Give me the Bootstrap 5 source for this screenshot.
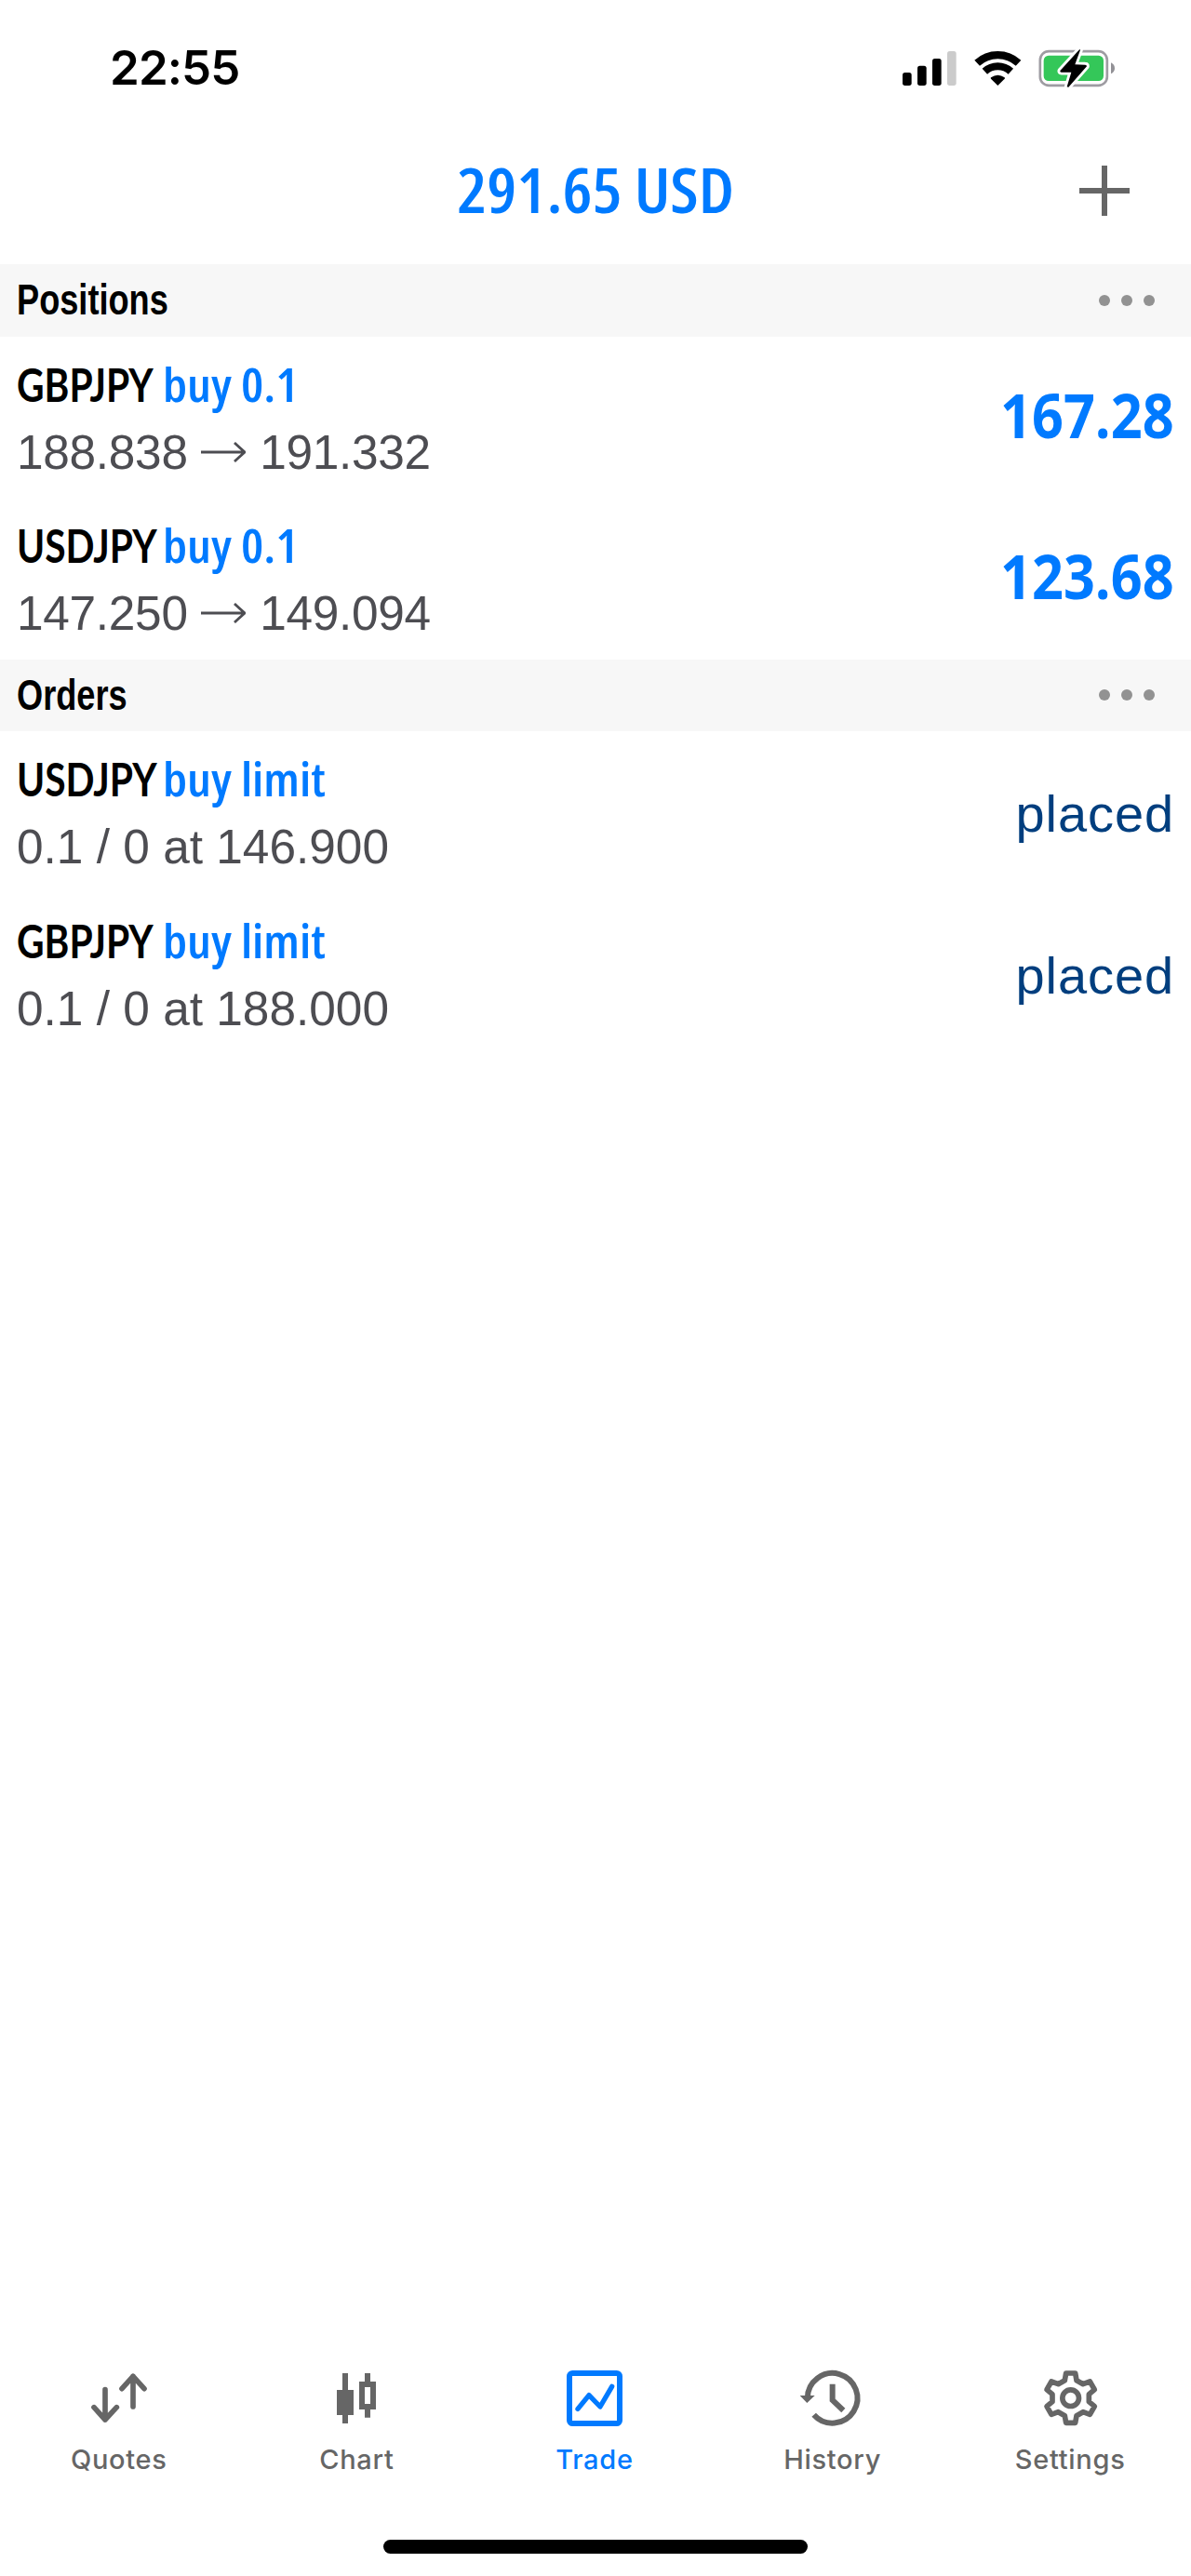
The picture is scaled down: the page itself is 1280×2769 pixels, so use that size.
<!DOCTYPE html>
<html lang="en">
<head>
<meta charset="utf-8">
<meta name="viewport" content="width=device-width, initial-scale=1">
<title>Trade</title>
<link href="https://cdn.jsdelivr.net/npm/bootstrap@5.3.0/dist/css/bootstrap.min.css" rel="stylesheet">
<style>
  :root { --accent: #007aff; --ink-soft: #4d4d52; --tab: #666; }
  body { font-family: "Liberation Sans", Arial, sans-serif; color: #000; background: #fff; }
  .screen { height: 2769px; }
  .status { height: 145px; padding: 0 80px 0 118px; }
  .clock { font: 600 51px/145px Inter, sans-serif; letter-spacing: -.9px; }
  .topbar { height: 139px; padding-bottom: 23px; }
  .balance { font: 600 66px/114px "Open Sans", sans-serif; font-stretch: 75%; transform: scaleX(1.086); color: var(--accent); }
  .add { padding-right: 66px; padding-top: 3px; }
  .section-bar { height: 77.5px; background: #f7f7f7; padding: 0 39px 0 18px; }
  .section-name { font-weight: 700; font-size: 46.5px; line-height: 77px; transform: scaleX(.778); transform-origin: 0 50%; }
  .deal { height: 173.6px; padding: 16px 18px 13px 18px; }
  .deal-title { line-height: 71px; }
  .deal-symbol { width: 157px; font: 700 50px/71px Lato, sans-serif; transform: scaleX(.815); transform-origin: 0 50%; }
  .deal-kind { font: 600 50px/71px "Open Sans", sans-serif; font-stretch: 75%; transform: scaleX(1.088); transform-origin: 0 50%; color: var(--accent); }
  .deal-info { font-size: 51.4px; line-height: 74px; color: var(--ink-soft); }
  .deal-price { letter-spacing: -.3px; }
  .deal-info svg { margin: 0 15px 0 14.5px; }
  .profit { font: 700 67px/134px "Open Sans", sans-serif; transform: scaleX(.886); transform-origin: 100% 50%; color: var(--accent); }
  .state { font-size: 56px; line-height: 146px; letter-spacing: .9px; color: #003e7e; }
  .tabs { width: 1278px; padding-bottom: 68px; }
  .tab { color: var(--tab); font: 500 29px/36px Inter, sans-serif; letter-spacing: .7px; }
  .tab svg { margin-bottom: 18px; }
  .tab.current { color: var(--accent); }
  .home-bar { width: 456px; height: 15px; margin: 0 auto 24px 412px; }
</style>
<script src="https://cdn.jsdelivr.net/npm/bootstrap@5.3.0/dist/js/bootstrap.bundle.min.js"></script>
</head>
<body>
<svg class="d-none">
  <symbol id="arrow" viewBox="0 0 48 22"><path d="M0 11H46M36 1l11 10-11 10" fill="none" stroke="currentColor" stroke-width="2.8"/></symbol>
  <symbol id="dots" viewBox="0 0 60 12"><g fill="#929292"><circle cx="6" cy="6" r="6"/><circle cx="30" cy="6" r="6"/><circle cx="54" cy="6" r="6"/></g></symbol>
</svg>
<div class="screen d-flex flex-column overflow-hidden">
  <header>
    <div class="status d-flex justify-content-between align-items-center">
      <span class="clock">22:55</span>
      <svg width="230" height="44" viewBox="90 60 690 132">
        <rect x="90" y="141" width="29" height="42" rx="8"/>
        <rect x="138" y="119" width="29" height="64" rx="8"/>
        <rect x="186" y="96" width="29" height="87" rx="8"/>
        <rect x="234" y="72" width="29" height="111" rx="8" fill="#cbcbcb"/>
        <g fill="none" stroke="#000"><path d="M330.4 110.4A98.5 98.5 0 0 1 463.6 110.4" stroke-width="25"/><path d="M355 137.3A62 62 0 0 1 439 137.3" stroke-width="24"/></g>
        <path d="M375 157Q397 141 419 157Q421 159 419 161L397 183L375 161Q373 159 375 157Z"/>
        <rect x="533.5" y="72.5" width="216" height="110" rx="28" fill="#fff" stroke="#9e9ca2" stroke-width="8"/>
        <rect x="545" y="86" width="193" height="82" rx="16" fill="#34c759"/>
        <path d="M762 109Q774 115 774 127T762 145Z" fill="#929196"/>
        <path d="M661 66L598 135Q597 140 602 140L634 140L620 187L625 188L684 121Q684 116 679 116L646 115L663 68Z" stroke="#fff" stroke-width="17" stroke-linejoin="round" paint-order="stroke"/>
      </svg>
    </div>
    <div class="topbar d-flex align-items-center">
      <div class="flex-fill w-25"></div>
      <div class="balance text-nowrap">291.65 USD</div>
      <div class="add flex-fill w-25 d-flex justify-content-end">
        <svg width="54" height="54" viewBox="0 0 54 54"><path d="M27 0V54M0 27H54" stroke="#666" stroke-width="6"/></svg>
      </div>
    </div>
  </header>

  <main class="flex-grow-1">
    <div class="section-bar d-flex justify-content-between align-items-center">
      <div class="section-name">Positions</div><svg width="60" height="12"><use href="#dots"/></svg>
    </div>
    <div class="deal d-flex justify-content-between">
      <div>
        <div class="deal-title d-flex"><span class="deal-symbol">GBPJPY</span><span class="deal-kind">buy 0.1</span></div>
        <div class="deal-info deal-price d-flex align-items-center"><span>188.838</span><svg width="48" height="22"><use href="#arrow"/></svg><span>191.332</span></div>
      </div>
      <div class="profit">167.28</div>
    </div>
    <div class="deal d-flex justify-content-between">
      <div>
        <div class="deal-title d-flex"><span class="deal-symbol">USDJPY</span><span class="deal-kind">buy 0.1</span></div>
        <div class="deal-info deal-price d-flex align-items-center"><span>147.250</span><svg width="48" height="22"><use href="#arrow"/></svg><span>149.094</span></div>
      </div>
      <div class="profit">123.68</div>
    </div>

    <div class="section-bar d-flex justify-content-between align-items-center">
      <div class="section-name">Orders</div><svg width="60" height="12"><use href="#dots"/></svg>
    </div>
    <div class="deal d-flex justify-content-between">
      <div>
        <div class="deal-title d-flex"><span class="deal-symbol">USDJPY</span><span class="deal-kind">buy limit</span></div>
        <div class="deal-info"><span>0.1 / 0 at 146.900</span></div>
      </div>
      <div class="state">placed</div>
    </div>
    <div class="deal d-flex justify-content-between">
      <div>
        <div class="deal-title d-flex"><span class="deal-symbol">GBPJPY</span><span class="deal-kind">buy limit</span></div>
        <div class="deal-info"><span>0.1 / 0 at 188.000</span></div>
      </div>
      <div class="state">placed</div>
    </div>
  </main>

  <footer>
    <nav class="tabs d-flex">
      <div class="tab col d-flex flex-column align-items-center">
        <svg width="60" height="60" viewBox="143 84 180 180" fill="none" stroke="currentColor" stroke-width="17" stroke-linecap="round" stroke-linejoin="round"><path d="M188 146V243M152 203L188 243L225 203M278 201V103M242 143L278 103L314 143"/></svg>
        <span>Quotes</span>
      </div>
      <div class="tab col d-flex flex-column align-items-center">
        <svg width="60" height="60" viewBox="909 84 180 180" fill="currentColor"><path d="M954 93h18v54h18v81h-18v27h-18v-27h-18v-81h18zM1026 93h18v27h18v90h-18v26h-18v-26h-18v-90h18zM1026 138v54h18v-54z" fill-rule="evenodd"/></svg>
        <span>Chart</span>
      </div>
      <div class="tab current col d-flex flex-column align-items-center">
        <svg width="60" height="60" viewBox="147 84 180 180" fill="none" stroke="currentColor"><rect x="156" y="93" width="162" height="162" rx="10" stroke-width="18"/><path d="M183 208L219 164L255 201L293 136" stroke-width="16" stroke-linecap="round" stroke-linejoin="round"/></svg>
        <span>Trade</span>
      </div>
      <div class="tab col d-flex flex-column align-items-center">
        <svg class="overflow-visible" width="60" height="60" viewBox="914 84 180 180" fill="none" stroke="currentColor" stroke-width="18"><path d="M922.500 173A80.500 80.500 0 1 1 943 227M1003 128V180L1038 213"/><path d="M898 165H946L921 189Z" fill="currentColor" stroke="none"/></svg>
        <span>History</span>
      </div>
      <div class="tab col d-flex flex-column align-items-center">
        <svg width="60" height="60" viewBox="-92 -89 180 180" fill="none" stroke="currentColor" stroke-width="17" stroke-linejoin="round"><path d="M-19-57L-15-80H15L19-57L40-45L62-53L77-27L59-12V12L77 27L62 53L40 45L19 57L15 80H-15L-19 57L-40 45L-62 53L-77 27L-59 12V-12L-77-27L-62-53L-40-45Z"/><circle r="26.500"/></svg>
        <span>Settings</span>
      </div>
    </nav>
    <div class="home-bar bg-black rounded-pill"></div>
  </footer>
</div>
</body>
</html>
